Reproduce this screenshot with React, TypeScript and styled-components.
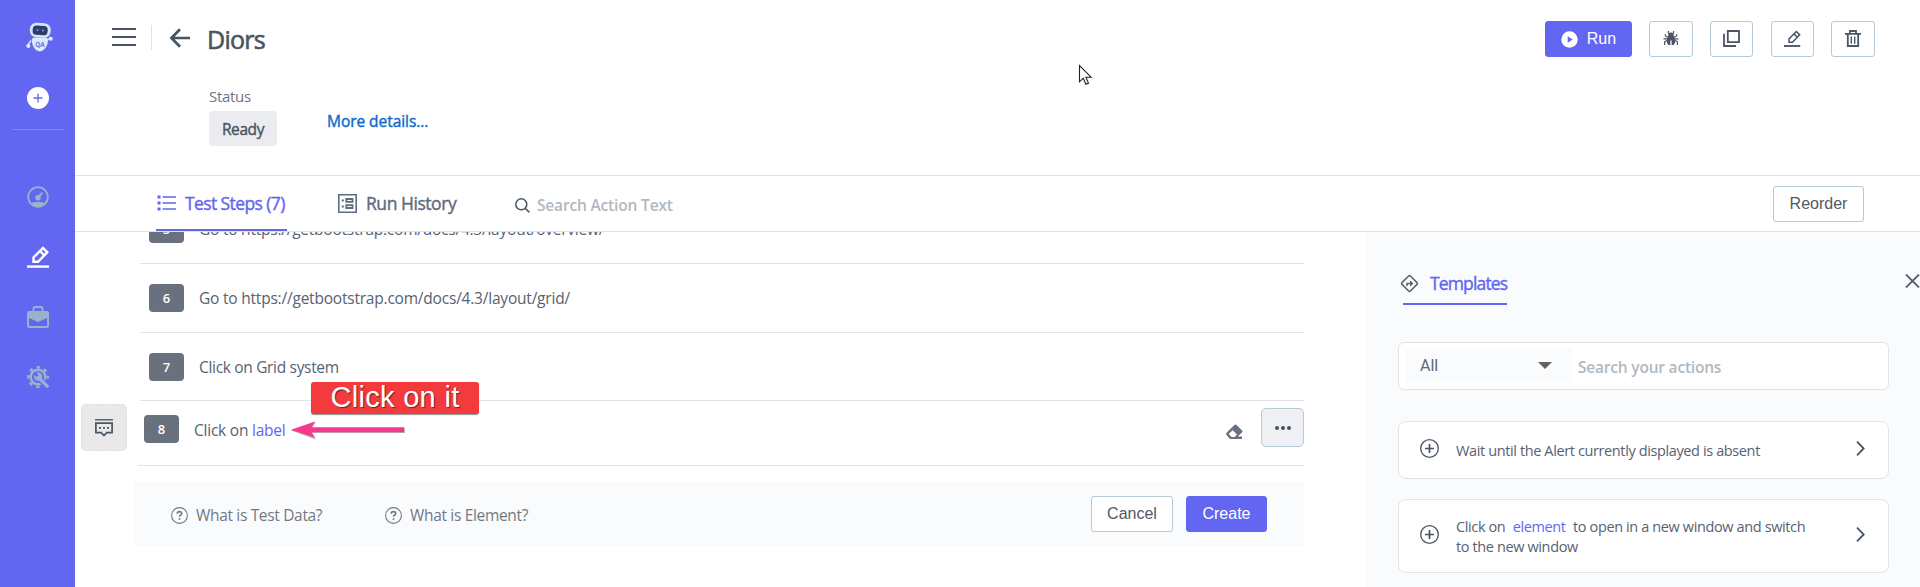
import React from "react";
import styled, { createGlobalStyle, css } from "styled-components";

const Global = createGlobalStyle`
  * { box-sizing: border-box; }
  body { margin: 0; background: #fff; overflow: hidden; font-family: "Open Sans", "Noto Sans", sans-serif; color: #566070; }
  svg { display: block; flex: none; }
`;

const c = {
  brand: "#6366f1",
  ink: "#485465",
  body: "#586271",
  line: "#e1e3e6",
  control: "#b4cad6",
  pale: "#fafbfd",
  side: "#9bb2cb",
};

const medium = css`
  -webkit-text-stroke: 0.4px currentColor;
`;

const App = styled.div`
  display: flex;
  width: 1920px;
  height: 587px;
  overflow: hidden;
  position: relative;
`;

const Sidebar = styled.nav`
  width: 75px;
  flex: none;
  background: ${c.brand};
  display: flex;
  flex-direction: column;
  align-items: center;
  padding-top: 21px;
`;

const Logo = styled.div`
  margin-bottom: 34px;
`;

const Rule = styled.div`
  width: 52px;
  height: 1px;
  margin: 20px 0 56px;
  background: #8386dc;
`;

const NavItem = styled.div<{ $active?: boolean }>`
  height: 60px;
  display: flex;
  align-items: flex-start;
  color: ${(p) => (p.$active ? "#fff" : c.side)};
`;

const Main = styled.main`
  flex: 1;
  display: flex;
  flex-direction: column;
  min-width: 0;
`;

const Header = styled.header`
  height: 176px;
  border-bottom: 1px solid ${c.line};
`;

const TitleBar = styled.div`
  display: flex;
  align-items: center;
  height: 57px;
  padding: 18px 45px 0 37px;
  color: ${c.ink};
`;

const MenuSlot = styled.div`
  margin-bottom: 2px;
`;

const Separator = styled.div`
  width: 1px;
  height: 25px;
  margin: 0 18px 0 15px;
  background: #dfe2e6;
`;

const Title = styled.h1`
  flex: 1;
  margin: 2px 0 0 17px;
  font-size: 25px;
  line-height: 36px;
  font-weight: 400;
  letter-spacing: -0.75px;
  color: #4b5460;
  -webkit-text-stroke: 0.6px currentColor;
`;

const Actions = styled.div`
  display: flex;
  align-self: flex-start;
  margin-top: 3px;
  gap: 17px;
`;

const Button = styled.button<{ $primary?: boolean; $width: number }>`
  display: flex;
  align-items: center;
  justify-content: center;
  gap: 9px;
  width: ${(p) => p.$width}px;
  height: 36px;
  padding: 0;
  border: 1px solid ${(p) => (p.$primary ? c.brand : c.control)};
  border-radius: 3px;
  background: ${(p) => (p.$primary ? c.brand : "#fff")};
  color: ${(p) => (p.$primary ? "#fff" : "#505966")};
  font: 16px "Liberation Sans", Arial, sans-serif;
`;

const IconButton = styled(Button)<{ $after?: number }>`
  padding-bottom: 2px;
  margin-right: ${(p) => p.$after ?? 0}px;
  color: #4b5563;
`;

const Summary = styled.div`
  display: flex;
  gap: 50px;
  padding: 27px 0 0 134px;
`;

const Label = styled.div`
  font-size: 15px;
  line-height: 24px;
  letter-spacing: -0.3px;
  color: #6b7583;
`;

const StatusBadge = styled.div`
  width: 68px;
  height: 35px;
  margin-top: 3px;
  border-radius: 4px;
  background: #ebecf0;
  color: #4b5460;
  text-align: center;
  font-size: 15.5px;
  line-height: 36px;
  letter-spacing: -0.4px;
  ${medium}
`;

const Details = styled.a`
  margin-top: 25px;
  font-size: 15.5px;
  line-height: 24px;
  letter-spacing: -0.05px;
  color: #0b6bcb;
  ${medium}
`;

const Tabs = styled.div`
  display: flex;
  align-items: flex-start;
  height: 56px;
  padding: 0 56px 0 81px;
  border-bottom: 1px solid ${c.line};
`;

const Tab = styled.div<{ $active?: boolean; $width: number; $before?: number }>`
  display: flex;
  align-items: flex-start;
  gap: 9px;
  width: ${(p) => p.$width}px;
  height: 55px;
  margin-left: ${(p) => p.$before ?? 0}px;
  padding: 18px 0 0 1px;
  white-space: nowrap;
  font-size: 17.5px;
  line-height: 19px;
  letter-spacing: ${(p) => (p.$active ? -0.6 : -0.45)}px;
  color: ${(p) => (p.$active ? c.brand : "#5f6b7e")};
  ${medium}
  ${(p) => p.$active && css`border-bottom: 2px solid ${c.brand};`}
`;

const TabIconSlot = styled.div`
  padding-top: 1px;
`;

const ActionSearch = styled.div`
  display: flex;
  gap: 7px;
  flex: 1;
  margin-left: 58px;
  padding-top: 22px;
  color: ${c.ink};
`;

const Placeholder = styled.span`
  font-size: 15.5px;
  line-height: 15px;
  font-weight: 600;
  letter-spacing: -0.17px;
  color: #b0b8c1;
`;

const ReorderSlot = styled.div`
  padding-top: 10px;
`;

const Workspace = styled.div`
  display: flex;
  flex: 1;
  min-height: 0;
`;

const StepsColumn = styled.section`
  width: 1229px;
  height: 355px;
  margin-right: 63px;
  overflow: hidden;
`;

const StepRow = styled.div<{ $h: number; $bottom?: number }>`
  display: flex;
  align-items: flex-end;
  height: ${(p) => p.$h}px;
  margin-left: 65px;
  padding: 0 0 ${(p) => p.$bottom ?? 20}px 9px;
  gap: 15px;
  border-bottom: 1px solid ${c.line};
`;

const StepNumber = styled.div`
  flex: none;
  width: 35px;
  height: 28px;
  border-radius: 4px;
  background: #69717e;
  color: #fff;
  text-align: center;
  font-size: 13px;
  line-height: 29px;
  font-weight: 600;
`;

const StepText = styled.div<{ $track?: number }>`
  font-size: 15.5px;
  line-height: 28px;
  letter-spacing: ${(p) => p.$track ?? -0.32}px;
  white-space: nowrap;
  color: ${c.body};
`;

const Param = styled.span`
  color: ${c.brand};
`;

const EditRow = styled.div`
  display: flex;
  align-items: flex-start;
  height: 65px;
  padding-left: 6px;
`;

const CommentButton = styled.div`
  display: flex;
  align-items: center;
  justify-content: center;
  width: 46px;
  height: 47px;
  margin-top: 3px;
  border: 1px dashed #dfdfe0;
  border-radius: 5px;
  background: #e9e9ea;
  color: #4b5563;
`;

const EditBody = styled.div`
  display: flex;
  flex: 1;
  height: 65px;
  margin-left: 11px;
  padding: 14px 0 0 6px;
  gap: 15px;
  border-bottom: 1px solid ${c.line};
`;

const EditText = styled(StepText)`
  padding-top: 1px;
`;

const RowTools = styled.div`
  display: flex;
  margin: -7px 0 0 auto;
  gap: 18px;
  color: #69717e;
`;

const EraserSlot = styled.div`
  padding-top: 16px;
`;

const MoreButton = styled.div`
  display: flex;
  align-items: center;
  justify-content: center;
  width: 43px;
  height: 39px;
  border: 1px solid ${c.control};
  border-radius: 5px;
  background: #eff0f4;
  color: #475166;
`;

const HelpBar = styled.div`
  display: flex;
  align-items: center;
  height: 64px;
  margin: 16px 0 0 59px;
  padding: 0 37px;
  background: ${c.pale};
`;

const Help = styled.div<{ $width: number }>`
  display: flex;
  align-items: center;
  gap: 8px;
  width: ${(p) => p.$width}px;
  padding-top: 2px;
  white-space: nowrap;
  font-size: 15.5px;
  letter-spacing: -0.33px;
  color: #717983;
`;

const FormButtons = styled.div`
  display: flex;
  gap: 13px;
  margin: 0 0 0 auto;
`;

const Panel = styled.aside`
  flex: 1;
  padding: 42px 0 0 31px;
  background: ${c.pale};
  overflow: hidden;
`;

const PanelHead = styled.div`
  display: flex;
  justify-content: space-between;
  height: 68px;
`;

const PanelTab = styled.div`
  display: flex;
  gap: 11px;
  padding-left: 2px;
  height: 29px;
  font-size: 17.5px;
  line-height: 19px;
  letter-spacing: -0.85px;
  color: ${c.brand};
  ${medium}
`;

const PanelTabLine = styled.div`
  width: 104px;
  height: 2px;
  margin-left: 5px;
  background: ${c.brand};
`;

const Filter = styled.div`
  display: flex;
  width: 491px;
  height: 48px;
  padding: 6px;
  gap: 6px;
  border: 1px solid ${c.line};
  border-radius: 6px;
  background: #fff;
`;

const Select = styled.div`
  display: flex;
  align-items: center;
  justify-content: space-between;
  width: 167px;
  height: 34px;
  padding: 0 20px 0 15px;
  background: ${c.pale};
  font-family: Roboto, sans-serif;
  font-size: 16px;
  line-height: 30px;
  color: #606873;
`;

const Caret = styled.svg`
  margin-bottom: 2px;
`;

const FilterHint = styled(Placeholder)`
  line-height: 37px;
  letter-spacing: -0.2px;
`;

const Card = styled.div<{ $h: number; $gap: number }>`
  display: flex;
  align-items: center;
  width: 491px;
  height: ${(p) => p.$h}px;
  margin-top: ${(p) => p.$gap}px;
  padding: 0 23px 3px 21px;
  border: 1px solid ${c.line};
  border-radius: 8px;
  background: #fff;
  color: ${c.ink};
`;

const CardText = styled.div`
  flex: 1;
  padding: 5px 0 0 17px;
  font-size: 14.5px;
  line-height: 20px;
  letter-spacing: -0.38px;
  white-space: nowrap;
  color: ${c.body};
`;

const CardParam = styled(Param)`
  margin: 0 4px;
`;

const Callout = styled.div`
  position: absolute;
  left: 311px;
  top: 382px;
  width: 168px;
  height: 32px;
  border-radius: 3px;
  background: #f33b3d;
  box-shadow: 0 1px 1px #8a8f8f;
  color: #fff;
  text-align: center;
  font: 29px/30px "Liberation Sans", Arial, sans-serif;
  letter-spacing: 0.3px;
  text-shadow: 1px 1px 1px #6c2426;
`;

const PointerArrow = styled.svg`
  position: absolute;
  left: 290px;
  top: 420px;
`;

const Cursor = styled.svg`
  position: absolute;
  left: 1078px;
  top: 64px;
`;

const Robot = () => (
  <svg width="30" height="32" viewBox="0 0 30 32">
    <path d="M8 19.500 4.500 24.500M24 19l3.500-1.500" stroke="#cfe0fa" strokeWidth="1.600" />
    <circle cx="5.300" cy="25" r="2" fill="#e3edfc" />
    <circle cx="27.700" cy="17.700" r="2" fill="#e3edfc" />
    <path d="M8.800 19Q8.800 16.500 12 16.500H21.500Q25.200 16.500 25 19.500 24.500 26 20.500 29 17 31.800 13 29 9 25.500 8.800 19Z" fill="#dce9fc" />
    <rect x="6.800" y="2" width="21" height="14.500" rx="6.500" fill="#d3e4fa" transform="rotate(4 17 9)" />
    <rect x="9.700" y="4.700" width="15" height="9.300" rx="3.800" fill="#2e3c5e" transform="rotate(4 17 9)" />
    <circle cx="14.500" cy="9" r="1.300" fill="#6472ef" />
    <circle cx="20" cy="9.500" r="1.300" fill="#6472ef" />
    <text x="17" y="26" textAnchor="middle" fontFamily="Open Sans, sans-serif" fontSize="6.500" fontWeight="700" fill="#6d7ae2">QA</text>
  </svg>
);

const PlusDisc = () => (
  <svg width="22" height="22" viewBox="0 0 22 22">
    <circle cx="11" cy="11" r="11" fill="#fff" />
    <path d="M11 6.500v9M6.500 11h9" stroke={c.brand} strokeWidth="1.300" />
  </svg>
);

const Gauge = () => (
  <svg width="22" height="22" viewBox="0 0 22 22" fill="none" stroke="currentColor">
    <circle cx="11" cy="11" r="9.800" strokeWidth="1.800" />
    <path d="M3 17.500q8-3.500 16 0-8 7-16 0Z" fill="currentColor" stroke="none" />
    <circle cx="11" cy="11.700" r="2.700" fill="currentColor" stroke="none" />
    <path d="m11.500 11 4-4.200" strokeWidth="2" />
  </svg>
);

const Pencil = ({ size, bold }: { size: number; bold?: boolean }) => (
  <svg width={size} height={size} viewBox="0 0 22 22" fill="none" stroke="currentColor">
    <path d="M6.500 15.800v-4.300L16 2l4.300 4.300L11 15.800Z" strokeWidth={bold ? 2.400 : 1.900} />
    <path d="m13 5 4.300 4.300" strokeWidth={bold ? 2.400 : 1.900} />
    <path d={bold ? "M0 20.600h22" : "M0 20.700h21"} strokeWidth="2.400" />
  </svg>
);

const Briefcase = () => (
  <svg width="22" height="22" viewBox="0 0 22 22">
    <path d="M6.500 5V2.500Q6.500 1 8 1h6q1.500 0 1.500 1.500V5" fill="none" stroke="currentColor" strokeWidth="1.900" />
    <path fillRule="evenodd" d="M2 5h18q2 0 2 2v13q0 2-2 2H2q-2 0-2-2V7q0-2 2-2ZM2 12v8h18v-8l-9 4Z" fill="currentColor" />
  </svg>
);

const GearWrench = () => (
  <svg width="22" height="22" viewBox="0 0 22 22">
    <circle cx="11" cy="11" r="7.300" fill="none" stroke="currentColor" strokeWidth="2.500" />
    <circle cx="11" cy="11" r="9.700" fill="none" stroke="currentColor" strokeWidth="2.600" strokeDasharray="3.400 4.218" strokeDashoffset="1.700" />
    <path d="m14 14 7 7" stroke={c.brand} strokeWidth="6" />
    <path d="m12 12 8.200 8.200" stroke="currentColor" strokeWidth="3.300" strokeLinecap="round" />
    <path d="M7.200 8.700 9.500 11l2-2L9.200 6.700a4.200 4.200 0 1 1-2 2Z" fill="currentColor" />
  </svg>
);

const Menu = () => (
  <svg width="24" height="20" viewBox="0 0 24 20">
    <path d="M0 2h24M0 10h24M0 18h24" stroke="currentColor" strokeWidth="2" />
  </svg>
);

const Back = () => (
  <svg width="20" height="20" viewBox="0 0 20 20" fill="none" stroke="currentColor" strokeWidth="2.700">
    <path d="M20 10H2M10 1.200 1.500 10 10 18.800" />
  </svg>
);

const Play = () => (
  <svg width="17" height="17" viewBox="0 0 17 17">
    <circle cx="8.500" cy="8.500" r="8.200" fill="#fff" />
    <path d="m6.700 5.200 5 3.300-5 3.300Z" fill={c.brand} />
  </svg>
);

const Bug = () => (
  <svg width="16" height="15" viewBox="0 0 16 16" fill="none" stroke="currentColor" strokeWidth="1.300">
    <path d="M5.300 0v3M10.700 0v3M1.200 15v-3.500L5 9.500M14.800 15v-3.500L11 9.500M0 8.500h16M2 3.500v1.800L5 7M14 3.500v1.800L11 7" />
    <path d="M8 1.500q3 0 3 3.500l1.300 4v3.500L10.800 15H8.700v-5H7.300v5H5.200l-1.500-2.500V9L5 5q0-3.500 3-3.500Z" fill="currentColor" stroke="none" />
  </svg>
);

const Copy = () => (
  <svg width="17" height="17" viewBox="0 0 17 17" fill="none" stroke="currentColor" strokeWidth="1.800">
    <path d="M4.800 1H16v11.200H4.800ZM1 3.800V16h12" />
  </svg>
);

const Trash = () => (
  <svg width="16" height="17" viewBox="0 0 16 17" fill="none" stroke="currentColor" strokeWidth="1.800">
    <path d="M0 3.800h16M5 3.500V1h6v2.500M2.800 4v12h10.400V4" />
    <path d="M6.300 6.500v7.300M9.700 6.500v7.300" strokeWidth="1.400" />
  </svg>
);

const ListIcon = () => (
  <svg width="19" height="16" viewBox="0 0 19 16" fill="none" stroke="currentColor" strokeWidth="1.600">
    <path d="M5.500 2H19M5.500 8H19M5.500 14H19" />
    <path d="M.5 2h3M.5 8h3M.5 14h3" strokeWidth="2.800" />
  </svg>
);

const HistoryIcon = () => (
  <svg width="19" height="19" viewBox="0 0 19 19" fill="none" stroke="currentColor" strokeWidth="1.600">
    <path d="M.8.8h17.400v17.400H.8Z" />
    <path d="M8.300 5h6.200v2.800H8.300ZM8.300 11.200h6.200V14H8.300Z" strokeWidth="1.800" />
    <path d="M3.800 6.500h2M3.800 12.500h2" strokeWidth="2" />
  </svg>
);

const SearchIcon = () => (
  <svg width="15" height="15" viewBox="0 0 15 15" fill="none" stroke="currentColor" strokeWidth="1.500">
    <circle cx="6.300" cy="6.300" r="5.500" />
    <path d="m10.200 10.200 4.200 4.200" />
  </svg>
);

const CommentIcon = () => (
  <svg width="18" height="18" viewBox="0 0 18 18" fill="none" stroke="currentColor">
    <path d="M0 .8h18" strokeWidth="1.400" />
    <path d="M.9 4.200h16.200v9.500h-5.300L9 16.500l-2.800-2.800H.9Z" strokeWidth="1.700" />
    <path d="M4 8.800h2M8 8.800h2M12 8.800h2" strokeWidth="1.800" />
  </svg>
);

const Eraser = () => (
  <svg width="17" height="16" viewBox="0 0 17 16">
    <path fillRule="evenodd" d="M.5 8.800 8.700.8q.8-.6 1.600 0l5.800 5.700q.8.900 0 1.700l-4.300 4.300H16V15H4L.5 11Q-.2 9.800.5 8.800ZM2.700 9.900l2.800 3h3.200L11 10.600 6.700 6.200Z" fill="currentColor" />
  </svg>
);

const Dots = () => (
  <svg width="16" height="4" viewBox="0 0 16 4" fill="currentColor">
    <circle cx="2" cy="2" r="2" /><circle cx="8" cy="2" r="2" /><circle cx="14" cy="2" r="2" />
  </svg>
);

const HelpIcon = () => (
  <svg width="17" height="17" viewBox="0 0 17 17" fill="none" stroke="currentColor">
    <circle cx="8.500" cy="8.500" r="7.900" strokeWidth="1.100" />
    <path d="M6.200 6.800q0-2.200 2.300-2.200 2.200 0 2.200 1.900 0 1.100-1.300 1.800-.9.500-.9 1.500" strokeWidth="1.600" />
    <path d="M7.700 12h1.700" strokeWidth="1.700" />
  </svg>
);

const RouteIcon = () => (
  <svg width="19" height="19" viewBox="0 0 19 19" fill="none" stroke="#5a6573">
    <rect x="3.600" y="3.600" width="11.800" height="11.800" rx="1.200" strokeWidth="1.600" transform="rotate(45 9.500 9.500)" />
    <path d="M7 12V9.500h3.500" strokeWidth="1.600" />
    <path d="m10 6.300 3.500 3.200L10 12.700Z" fill="#5a6573" stroke="none" />
  </svg>
);

const CloseIcon = () => (
  <svg width="15" height="14" viewBox="0 0 15 14">
    <path d="m1 .5 13 13M14 .5l-13 13" stroke="#56606e" strokeWidth="1.800" />
  </svg>
);

const AddIcon = () => (
  <svg width="19" height="19" viewBox="0 0 19 19" fill="none" stroke="currentColor">
    <circle cx="9.500" cy="9.500" r="8.800" strokeWidth="1.300" />
    <path d="M9.500 5v9M5 9.500h9" strokeWidth="1.700" />
  </svg>
);

const Chevron = () => (
  <svg width="9" height="15" viewBox="0 0 9 15" fill="none" stroke="currentColor" strokeWidth="1.800">
    <path d="m1 .7 6.700 6.800L1 14.300" />
  </svg>
);

export default function TestCasePage() {
  return (
    <App>
      <Global />
      <Sidebar>
        <Logo><Robot /></Logo>
        <PlusDisc />
        <Rule />
        <NavItem><Gauge /></NavItem>
        <NavItem $active><Pencil size={22} bold /></NavItem>
        <NavItem><Briefcase /></NavItem>
        <NavItem><GearWrench /></NavItem>
      </Sidebar>
      <Main>
        <Header>
          <TitleBar>
            <MenuSlot><Menu /></MenuSlot>
            <Separator />
            <Back />
            <Title>Diors</Title>
            <Actions>
              <Button $primary $width={87}><Play />Run</Button>
              <IconButton $width={44}><Bug /></IconButton>
              <IconButton $width={43} $after={1}><Copy /></IconButton>
              <IconButton $width={43}><Pencil size={17} /></IconButton>
              <IconButton $width={44}><Trash /></IconButton>
            </Actions>
          </TitleBar>
          <Summary>
            <div>
              <Label>Status</Label>
              <StatusBadge>Ready</StatusBadge>
            </div>
            <Details>More details...</Details>
          </Summary>
        </Header>
        <Tabs>
          <Tab $active $width={131}><TabIconSlot><ListIcon /></TabIconSlot>Test Steps (7)</Tab>
          <Tab $width={120} $before={50}><HistoryIcon />Run History</Tab>
          <ActionSearch><SearchIcon /><Placeholder>Search Action Text</Placeholder></ActionSearch>
          <ReorderSlot><Button $width={91}>Reorder</Button></ReorderSlot>
        </Tabs>
        <Workspace>
          <StepsColumn>
            <StepRow $h={32}><StepNumber>5</StepNumber><StepText $track={-0.23}>Go to https://getbootstrap.com/docs/4.3/layout/overview/</StepText></StepRow>
            <StepRow $h={69}><StepNumber>6</StepNumber><StepText $track={-0.21}>Go to https://getbootstrap.com/docs/4.3/layout/grid/</StepText></StepRow>
            <StepRow $h={68} $bottom={19}><StepNumber>7</StepNumber><StepText>Click on Grid system</StepText></StepRow>
            <EditRow>
              <CommentButton><CommentIcon /></CommentButton>
              <EditBody>
                <StepNumber>8</StepNumber>
                <EditText $track={-0.23}>Click on <Param>label</Param></EditText>
                <RowTools>
                  <EraserSlot><Eraser /></EraserSlot>
                  <MoreButton><Dots /></MoreButton>
                </RowTools>
              </EditBody>
            </EditRow>
            <HelpBar>
              <Help $width={214}><HelpIcon />What is Test Data?</Help>
              <Help $width={214}><HelpIcon />What is Element?</Help>
              <FormButtons>
                <Button $width={82}>Cancel</Button>
                <Button $primary $width={81}>Create</Button>
              </FormButtons>
            </HelpBar>
          </StepsColumn>
          <Panel>
            <PanelHead>
              <div>
                <PanelTab><RouteIcon />Templates</PanelTab>
                <PanelTabLine />
              </div>
              <CloseIcon />
            </PanelHead>
            <Filter>
              <Select>
                All
                <Caret width="14" height="7" viewBox="0 0 14 7"><path d="M0 0h14L7 7Z" fill="#626262" /></Caret>
              </Select>
              <FilterHint>Search your actions</FilterHint>
            </Filter>
            <Card $h={58} $gap={31}>
              <AddIcon />
              <CardText>Wait until the Alert currently displayed is absent</CardText>
              <Chevron />
            </Card>
            <Card $h={74} $gap={20}>
              <AddIcon />
              <CardText>
                Click on <CardParam>element</CardParam> to open in a new window and switch
                <br />
                to the new window
              </CardText>
              <Chevron />
            </Card>
          </Panel>
        </Workspace>
      </Main>
      <Callout>Click on it</Callout>
      <PointerArrow width="116" height="20" viewBox="0 0 116 20">
        <path d="M1 10.500 26 2l-4 6h93v5H22l4 6.500Z" fill="#8d8f94" opacity=".65" />
        <path d="M1 9.700 25 1.500 21.500 7.300H114v5H21.500l3.500 5.500Z" fill="#f4388c" />
      </PointerArrow>
      <Cursor width="16" height="22" viewBox="0 0 16 22">
        <path d="M1.500 1.500v16.300l3.800-3.600 2.600 6 2.600-1.100-2.600-5.900h5.200Z" fill="#fff" stroke="#1d1d2b" strokeWidth="1.100" />
      </Cursor>
    </App>
  );
}
